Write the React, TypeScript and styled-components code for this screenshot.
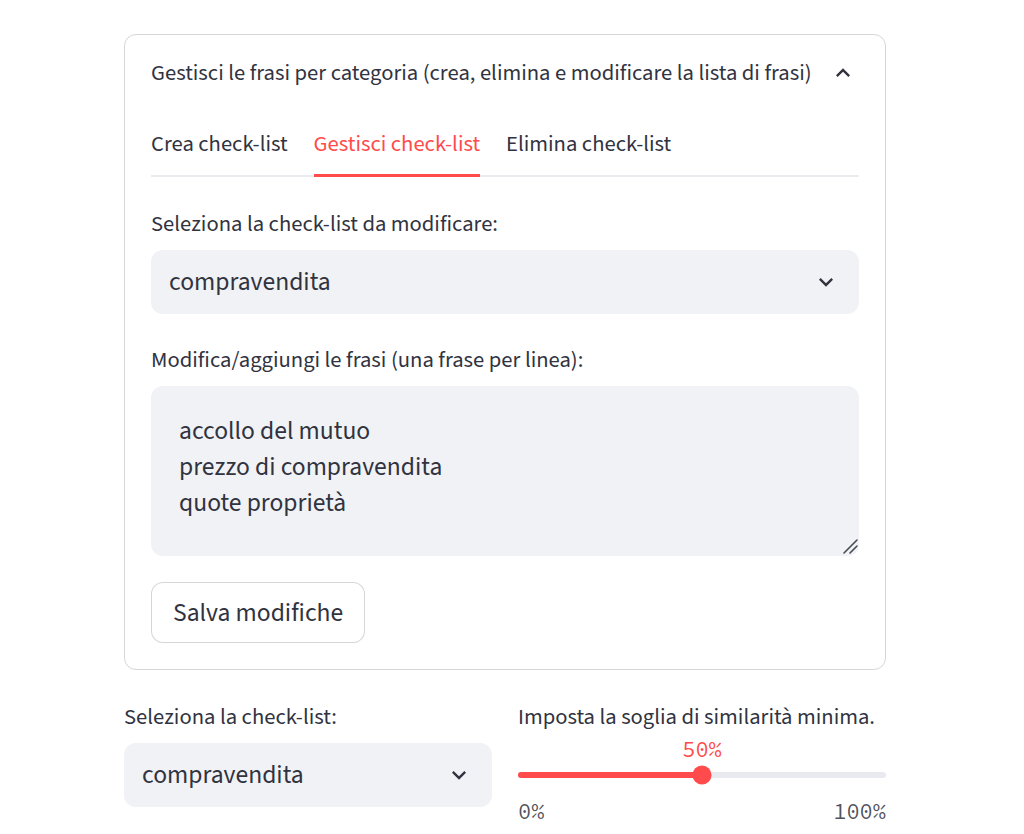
import React from "react";
import styled, { createGlobalStyle } from "styled-components";

const TEXT = "#31333F";
const RED = "#FF4B4B";
const FIELD_BG = "#F0F2F6";
const BORDER = "rgba(49, 51, 63, 0.2)";
const SANS = `"Source Sans 3", "Source Sans Pro", "Open Sans", sans-serif`;
const MONO = `"Source Code Pro", "DejaVu Sans Mono", "Liberation Mono", monospace`;

const GlobalStyle = createGlobalStyle`
  html, body { margin: 0; padding: 0; background: #ffffff; }
  body { font-family: ${SANS}; color: ${TEXT}; -webkit-font-smoothing: antialiased; }
  * { box-sizing: border-box; }
`;

const Main = styled.main`
  width: 762px;
  margin: 34px 0 0 124px;
  display: flex;
  flex-direction: column;
  gap: 27px;
`;

const Expander = styled.section`
  border: 1px solid ${BORDER};
  border-radius: 12px;
`;

const Summary = styled.div`
  display: flex;
  align-items: center;
  justify-content: space-between;
  padding: 22px 28px 22px 26px;
  font-size: 22.6px;
  line-height: 32px;
`;

const Content = styled.div`
  padding: 0 26px 26px;
  display: flex;
  flex-direction: column;
`;

const TabList = styled.div`
  display: flex;
  gap: 26px;
  border-bottom: 2px solid #EBECEF;
`;

const Tab = styled.div<{ $active?: boolean }>`
  padding: 17px 0 14px;
  margin-bottom: -2px;
  font-size: 22.6px;
  line-height: 32px;
  color: ${(p) => (p.$active ? RED : TEXT)};
  border-bottom: 3px solid ${(p) => (p.$active ? RED : "transparent")};
`;

const Panel = styled.div`
  display: flex;
  flex-direction: column;
  gap: 26px;
  padding-top: 27px;
`;

const Widget = styled.div`
  display: flex;
  flex-direction: column;
`;

const Label = styled.label`
  font-size: 22.6px;
  line-height: 40px;
  margin-bottom: 6px;
`;

const Select = styled.div`
  height: 64px;
  border-radius: 12px;
  background: ${FIELD_BG};
  display: flex;
  align-items: center;
  justify-content: space-between;
  padding: 0 19px 0 18px;
  font-size: 25.6px;
`;

const AreaBox = styled.div`
  position: relative;
`;

const TextArea = styled.textarea`
  display: block;
  width: 100%;
  height: 170px;
  border: none;
  outline: none;
  border-radius: 12px;
  background: ${FIELD_BG};
  color: ${TEXT};
  font-family: ${SANS};
  font-size: 25.6px;
  line-height: 36px;
  padding: 27px 28px;
  resize: none;
`;

const Grip = styled.svg`
  position: absolute;
  right: 1px;
  bottom: 2px;
  width: 16px;
  height: 16px;
`;

const Button = styled.button`
  align-self: flex-start;
  height: 61px;
  padding: 0 21px;
  border: 1px solid ${BORDER};
  border-radius: 12px;
  background: #ffffff;
  color: ${TEXT};
  font-family: ${SANS};
  font-size: 25.6px;
  line-height: 32px;
`;

const Columns = styled.div`
  display: grid;
  grid-template-columns: 1fr 1fr;
  gap: 26px;
`;

const Slider = styled.div`
  display: flex;
  flex-direction: column;
  margin-top: -6px;
`;

const ValueRow = styled.div`
  position: relative;
  height: 24px;
`;

const ThumbValue = styled.span`
  position: absolute;
  top: 0;
  transform: translateX(-50%);
  font-family: ${MONO};
  font-size: 22px;
  line-height: 24px;
  color: ${RED};
`;

const TrackArea = styled.div`
  position: relative;
  height: 28px;
  display: flex;
  align-items: center;
`;

const Track = styled.div`
  width: 100%;
  height: 6px;
  border-radius: 3px;
  background: #E9EAEF;
  overflow: hidden;
`;

const Fill = styled.div`
  height: 100%;
  background: ${RED};
`;

const Thumb = styled.div`
  position: absolute;
  top: 50%;
  width: 19px;
  height: 19px;
  border-radius: 50%;
  background: ${RED};
  transform: translate(-50%, -50%);
`;

const Ticks = styled.div`
  display: flex;
  justify-content: space-between;
  margin-top: 10px;
  font-family: ${MONO};
  font-size: 22px;
  line-height: 24px;
  color: rgba(49, 51, 63, 0.85);
`;

const Chevron = ({ up }: { up?: boolean }) => (
  <svg width="28" height="28" viewBox="0 0 24 24" fill={TEXT} aria-hidden="true">
    {up ? (
      <path d="M7.41 15.41L12 10.83l4.59 4.58L18 14l-6-6-6 6z" />
    ) : (
      <path d="M7.41 8.59L12 13.17l4.59-4.58L18 10l-6 6-6-6 1.41-1.41z" />
    )}
  </svg>
);

const SliderField = ({ value }: { value: number }) => {
  const pos = `${value}%`;
  return (
    <Slider>
      <ValueRow>
        <ThumbValue style={{ left: pos }}>{value}%</ThumbValue>
      </ValueRow>
      <TrackArea>
        <Track>
          <Fill style={{ width: pos }} />
        </Track>
        <Thumb style={{ left: pos }} />
      </TrackArea>
      <Ticks>
        <span>0%</span>
        <span>100%</span>
      </Ticks>
    </Slider>
  );
};

export default function App() {
  return (
    <>
      <GlobalStyle />
      <Main>
        <Expander>
          <Summary>
            <span>Gestisci le frasi per categoria (crea, elimina e modificare la lista di frasi)</span>
            <Chevron up />
          </Summary>
          <Content>
            <TabList>
              <Tab>Crea check-list</Tab>
              <Tab $active>Gestisci check-list</Tab>
              <Tab>Elimina check-list</Tab>
            </TabList>
            <Panel>
              <Widget>
                <Label>Seleziona la check-list da modificare:</Label>
                <Select>
                  <span>compravendita</span>
                  <Chevron />
                </Select>
              </Widget>
              <Widget>
                <Label>Modifica/aggiungi le frasi (una frase per linea):</Label>
                <AreaBox>
                  <TextArea
                    readOnly
                    value={"accollo del mutuo\nprezzo di compravendita\nquote proprietà"}
                  />
                  <Grip viewBox="0 0 16 16" aria-hidden="true">
                    <path d="M2 15L15 2M8 15L15 8" stroke="#4a4c55" strokeWidth="1.6" strokeLinecap="round" fill="none" />
                  </Grip>
                </AreaBox>
              </Widget>
              <Button>Salva modifiche</Button>
            </Panel>
          </Content>
        </Expander>
        <Columns>
          <Widget>
            <Label>Seleziona la check-list:</Label>
            <Select>
              <span>compravendita</span>
              <Chevron />
            </Select>
          </Widget>
          <Widget>
            <Label>Imposta la soglia di similarità minima.</Label>
            <SliderField value={50} />
          </Widget>
        </Columns>
      </Main>
    </>
  );
}
